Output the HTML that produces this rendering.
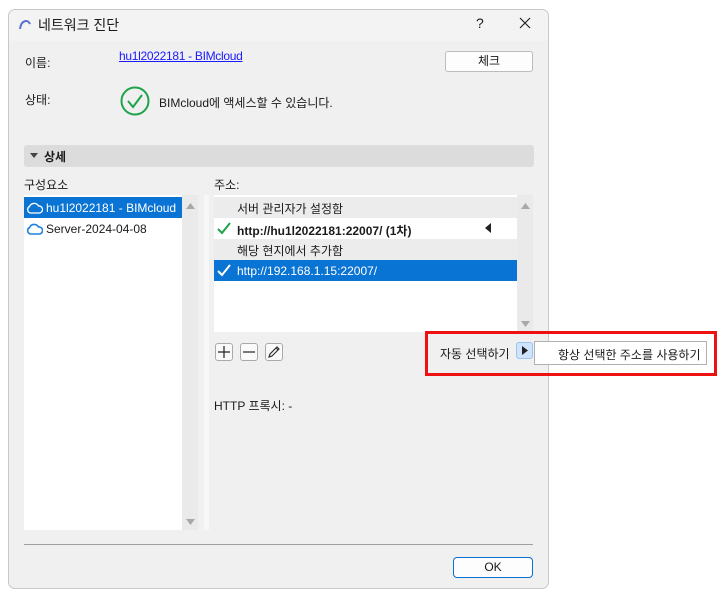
<!DOCTYPE html>
<html><head><meta charset="utf-8"><style>
*{box-sizing:border-box;margin:0;padding:0}
body{width:724px;height:601px;background:#fff;font-family:"Liberation Sans","Noto Sans CJK KR",sans-serif;font-size:12px;color:#1a1a1a;position:relative;overflow:hidden}
.a{position:absolute}
.dlg{left:8px;top:9px;width:541px;height:580px;background:#f0f0f0;border:1px solid #c8c8c8;border-radius:7px;overflow:hidden}
.title{left:0;top:0;width:541px;height:31px;background:#f3f3f3}
.t{white-space:nowrap}
</style></head><body>
<div class="a dlg">
 <div class="a title"></div>
</div>
<svg class="a" style="left:18px;top:17px" width="14" height="14"><path d="M2 12 C3 3 10 2 12 7" fill="none" stroke="#5a6fd0" stroke-width="2"/></svg>
<div class="a t" style="left:38px;top:15px;font-size:14px">네트워크 진단</div>
<div class="a t" style="left:476px;top:15px;font-size:14px">?</div>
<svg class="a" style="left:519px;top:17px" width="12" height="12"><path d="M1 1 L11 11 M11 1 L1 11" stroke="#222" stroke-width="1.2"/></svg>
<div class="a t" style="left:25px;top:54px">이름:</div>
<div class="a t" style="left:119px;top:49px;color:#1a1aff;text-decoration:underline;font-size:12px;letter-spacing:-0.3px">hu1l2022181 - BIMcloud</div>
<div class="a" style="left:445px;top:51px;width:88px;height:21px;background:#fdfdfd;border:1px solid #bcbcbc;border-radius:3px;text-align:center;line-height:19px">체크</div>
<div class="a t" style="left:25px;top:91px">상태:</div>
<svg class="a" style="left:120px;top:86px" width="30" height="30"><circle cx="15" cy="15" r="13.5" fill="none" stroke="#1fa34a" stroke-width="2"/><path d="M8 15 L13 21 L22 9" fill="none" stroke="#1fa34a" stroke-width="2"/></svg>
<div class="a t" style="left:159px;top:94px">BIMcloud에 액세스할 수 있습니다.</div>
<div class="a" style="left:24px;top:145px;width:510px;height:22px;background:#dcdcdc;border-radius:3px"></div>
<svg class="a" style="left:30px;top:153px" width="8" height="6"><path d="M0 0 L8 0 L4 5Z" fill="#444"/></svg>
<div class="a t" style="left:44px;top:148px;font-weight:bold">상세</div>
<div class="a t" style="left:24px;top:176px">구성요소</div>
<div class="a t" style="left:214px;top:176px">주소:</div>
<div class="a" style="left:24px;top:195px;width:158px;height:335px;background:#fff"></div>
<div class="a" style="left:182px;top:195px;width:16px;height:335px;background:#eaeaea"></div>
<div class="a" style="left:204px;top:195px;width:5px;height:335px;background:#f7f7f7"></div>
<div class="a" style="left:24px;top:197px;width:158px;height:21px;background:#0a74d4"></div>
<svg class="a" style="left:26px;top:201px" width="17" height="13"><path d="M4.5 12 A3.5 3.5 0 0 1 3.5 5.5 A5 5 0 0 1 12.5 5 A3.5 3.5 0 0 1 13.5 12 Z" fill="none" stroke="#fff" stroke-width="1.3"/></svg>
<div class="a t" style="left:46px;top:201px;color:#fff">hu1l2022181 - BIMcloud</div>
<svg class="a" style="left:26px;top:222px" width="17" height="13"><path d="M4.5 12 A3.5 3.5 0 0 1 3.5 5.5 A5 5 0 0 1 12.5 5 A3.5 3.5 0 0 1 13.5 12 Z" fill="none" stroke="#1e80e0" stroke-width="1.6"/></svg>
<div class="a t" style="left:46px;top:222px">Server-2024-04-08</div>
<svg class="a" style="left:186px;top:203px" width="9" height="6"><path d="M0 6 L9 6 L4.5 0Z" fill="#a8a8a8"/></svg>
<svg class="a" style="left:186px;top:519px" width="9" height="6"><path d="M0 0 L9 0 L4.5 6Z" fill="#a8a8a8"/></svg>
<div class="a" style="left:214px;top:195px;width:303px;height:137px;background:#fff"></div>
<div class="a" style="left:214px;top:197px;width:303px;height:21px;background:#ececec"></div>
<div class="a t" style="left:237px;top:200px">서버 관리자가 설정함</div>
<svg class="a" style="left:217px;top:222px" width="14" height="13"><path d="M1 7 L5 11 L13 1" fill="none" stroke="#1fa34a" stroke-width="2"/></svg>
<div class="a t" style="left:237px;top:222px;font-weight:bold">http://hu1l2022181:22007/ (1차)</div>
<svg class="a" style="left:485px;top:223px" width="6" height="10"><path d="M6 0 L6 10 L0 5Z" fill="#222"/></svg>
<div class="a" style="left:214px;top:239px;width:303px;height:21px;background:#ececec"></div>
<div class="a t" style="left:237px;top:242px">해당 현지에서 추가함</div>
<div class="a" style="left:214px;top:260px;width:303px;height:21px;background:#0a74d4"></div>
<svg class="a" style="left:217px;top:264px" width="14" height="13"><path d="M1 7 L5 11 L13 1" fill="none" stroke="#fff" stroke-width="2"/></svg>
<div class="a t" style="left:237px;top:264px;color:#fff">http://192.168.1.15:22007/</div>
<div class="a" style="left:517px;top:195px;width:16px;height:137px;background:#eaeaea"></div>
<svg class="a" style="left:521px;top:203px" width="9" height="6"><path d="M0 6 L9 6 L4.5 0Z" fill="#a8a8a8"/></svg>
<svg class="a" style="left:521px;top:321px" width="9" height="6"><path d="M0 0 L9 0 L4.5 6Z" fill="#a8a8a8"/></svg>
<div class="a" style="left:215px;top:343px;width:18px;height:18px;background:#fafafa;border:1px solid #aaa;border-radius:3px"></div>
<svg class="a" style="left:215px;top:343px" width="18" height="18"><path d="M9 3 V15 M3 9 H15" stroke="#222" stroke-width="1.2"/></svg>
<div class="a" style="left:240px;top:343px;width:18px;height:18px;background:#fafafa;border:1px solid #aaa;border-radius:3px"></div>
<svg class="a" style="left:240px;top:343px" width="18" height="18"><path d="M3 9 H15" stroke="#222" stroke-width="1.2"/></svg>
<div class="a" style="left:265px;top:343px;width:18px;height:18px;background:#fafafa;border:1px solid #aaa;border-radius:3px"></div>
<svg class="a" style="left:265px;top:343px" width="18" height="18"><path d="M4 14 L5 11 L12 4 L14 6 L7 13 Z M11 5 L13 7" fill="none" stroke="#333" stroke-width="1.2"/></svg>
<div class="a t" style="left:214px;top:397px">HTTP 프록시: -</div>
<div class="a" style="left:549px;top:331px;width:168px;height:45px;background:#fff"></div>
<div class="a" style="left:425px;top:331px;width:292px;height:45px;border:3px solid #ee1111"></div>
<div class="a t" style="left:440px;top:345px">자동 선택하기</div>
<div class="a" style="left:516px;top:342px;width:17px;height:17px;background:#cde4fb;border:1px solid #9cc4ee;border-radius:3px"></div>
<svg class="a" style="left:522px;top:346px" width="6" height="9"><path d="M0 0 L6 4.5 L0 9Z" fill="#222"/></svg>
<div class="a" style="left:534px;top:341px;width:173px;height:24px;background:#fff;border:1px solid #b0b0b0"></div>
<div class="a t" style="left:558px;top:346px">항상 선택한 주소를 사용하기</div>
<div class="a" style="left:24px;top:544px;width:509px;height:1px;background:#a0a0a0"></div>
<div class="a" style="left:453px;top:557px;width:80px;height:21px;background:#fdfdfd;border:1px solid #0a6fd0;border-radius:4px;text-align:center;line-height:19px">OK</div>
</body></html>
